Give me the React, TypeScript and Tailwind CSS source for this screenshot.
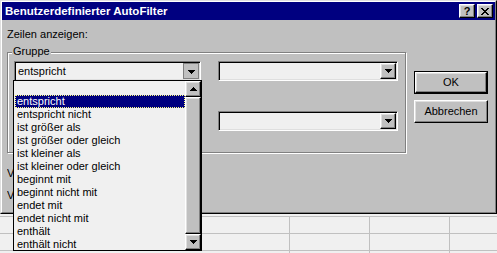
const raised =
  "border border-t-white border-l-white border-r-black border-b-black shadow-[inset_-1px_-1px_0_#808080,inset_1px_1px_0_#dfdfdf]";
const sunken =
  "border border-t-[#808080] border-l-[#808080] border-r-white border-b-white shadow-[inset_1px_1px_0_#000,inset_-1px_-1px_0_#dfdfdf]";

function ArrowDown() {
  return (
    <svg width="7" height="4" viewBox="0 0 7 4" shapeRendering="crispEdges">
      <path d="M0 0h7v1H0zM1 1h5v1H1zM2 2h3v1H2zM3 3h1v1H3z" fill="#000" />
    </svg>
  );
}

function ArrowUp() {
  return (
    <svg width="7" height="4" viewBox="0 0 7 4" shapeRendering="crispEdges">
      <path d="M3 0h1v1H3zM2 1h3v1H2zM1 2h5v1H1zM0 3h7v1H0z" fill="#000" />
    </svg>
  );
}

function CloseGlyph() {
  return (
    <svg width="8" height="7" viewBox="0 0 8 7" shapeRendering="crispEdges">
      <path
        d="M0 0h2v1H0zM6 0h2v1H6zM1 1h2v1H1zM5 1h2v1H5zM2 2h4v1H2zM3 3h2v1H3zM2 4h4v1H2zM1 5h2v1H1zM5 5h2v1H5zM0 6h2v1H0zM6 6h2v1H6z"
        fill="#000"
      />
    </svg>
  );
}

function Combo({ className, text, open }: { className: string; text?: string; open?: boolean }) {
  return (
    <div className={`${sunken} ${className} flex h-[20px] items-stretch bg-[#f0f0f0] p-[1px]`}>
      <div className="flex-1 truncate pl-[2px] leading-[16px] text-black">{text}</div>
      {open ? (
        <div className="flex w-[16px] items-center justify-center border border-[#808080] bg-[#c0c0c0] pl-[1px] pt-[1px]">
          <ArrowDown />
        </div>
      ) : (
        <div className={`${raised} flex w-[16px] items-center justify-center bg-[#c0c0c0]`}>
          <ArrowDown />
        </div>
      )}
    </div>
  );
}

const items = [
  "",
  "entspricht",
  "entspricht nicht",
  "ist größer als",
  "ist größer oder gleich",
  "ist kleiner als",
  "ist kleiner oder gleich",
  "beginnt mit",
  "beginnt nicht mit",
  "endet mit",
  "endet nicht mit",
  "enthält",
  "enthält nicht",
];

export default function App() {
  return (
    <div className="relative h-[253px] w-[497px] overflow-hidden bg-[#f0f0f0] font-['Liberation_Sans',Arial,sans-serif] text-[11px] text-black">
      {/* dialog */}
      <div className="h-[214px] w-[497px] border border-t-[#dfdfdf] border-l-[#dfdfdf] border-r-black border-b-black bg-[#c0c0c0]">
        <div className="flex h-full flex-col border border-t-white border-l-white border-r-[#808080] border-b-[#808080]">
          <div className="flex h-[18px] items-center justify-between bg-[#000080] pl-[3px] pr-[2px]">
            <span className="text-[11.5px] font-bold leading-[14px] text-white">Benutzerdefinierter AutoFilter</span>
            <div className="flex gap-[2px]">
              <div className={`${raised} flex h-[14px] w-[16px] items-center justify-center bg-[#c0c0c0] text-[11px] font-bold leading-none`}>
                ?
              </div>
              <div className={`${raised} flex h-[14px] w-[16px] items-center justify-center bg-[#c0c0c0]`}>
                <CloseGlyph />
              </div>
            </div>
          </div>

          <div className="flex">
            <div className="pl-[5px] pt-[8px]">
              <div className="leading-[13px]">Zeilen anzeigen:</div>
              <div className="relative mt-[11px] h-[101px] w-[399px] border border-[#808080] pl-[6px] pt-[8px] shadow-[inset_1px_1px_0_#fff,1px_1px_0_#fff]">
                <span className="absolute left-[4px] top-[-8px] bg-[#c0c0c0] px-[1px] leading-[13px]">Gruppe</span>
                <div className="flex gap-[17px]">
                  <Combo className="w-[187px]" text="entspricht" open />
                  <Combo className="w-[180px]" />
                </div>
                <div className="h-[30px]" />
                <div className="flex gap-[17px]">
                  <Combo className="w-[187px]" />
                  <Combo className="w-[180px]" />
                </div>
              </div>
              {/* hint lines, mostly hidden by the open list */}
              <div className="mt-[14px] flex w-[6px] flex-col gap-[9px] overflow-hidden whitespace-nowrap leading-[13px]">
                <span>Verwenden Sie ? als Stellvertreter für ein einzelnes Zeichen</span>
                <span>Verwenden Sie * als Stellvertreter für eine beliebige Zeichenfolge</span>
              </div>
            </div>

            <div className="ml-[8px] mt-[51px] flex flex-col gap-[6px]">
              <div className="h-[23px] w-[74px] border border-black">
                <div className={`${raised} flex h-full items-center justify-center bg-[#c0c0c0]`}>OK</div>
              </div>
              <div className={`${raised} flex h-[23px] w-[74px] items-center justify-center bg-[#c0c0c0]`}>Abbrechen</div>
            </div>
          </div>
        </div>
      </div>

      {/* spreadsheet behind */}
      <div className="pt-[2px]">
        {[0, 1, 2].map((r) => (
          <div key={r} className="flex h-[17px] border-t border-[#c0c0c0]">
            <div className="w-[289px]" />
            <div className="w-[80px] border-l border-[#c0c0c0]" />
            <div className="w-[80px] border-l border-[#c0c0c0]" />
            <div className="flex-1 border-l border-[#c0c0c0]" />
          </div>
        ))}
      </div>

      {/* open dropdown list */}
      <div className="absolute left-[13px] top-[80px] flex h-[171px] w-[189px] border border-black bg-[#f0f0f0]">
        <div className="flex-1 overflow-hidden pl-[1px] pt-[1px]">
          {items.map((it, i) =>
            i === 1 ? (
              <div
                key={i}
                className="h-[13px] border border-dotted border-[#ffff80] bg-[#000080] pl-[1px] leading-[11px] text-white"
              >
                {it}
              </div>
            ) : (
              <div key={i} className="h-[13px] pl-[2px] leading-[13px]">
                {it}
              </div>
            )
          )}
        </div>
        <div className="flex w-[16px] flex-col">
          <div className={`${raised} flex h-[16px] items-center justify-center bg-[#c0c0c0]`}>
            <ArrowUp />
          </div>
          <div className={`${raised} flex-1 bg-[#c0c0c0]`} />
          <div className={`${raised} flex h-[16px] items-center justify-center bg-[#c0c0c0]`}>
            <ArrowDown />
          </div>
        </div>
      </div>
    </div>
  );
}
